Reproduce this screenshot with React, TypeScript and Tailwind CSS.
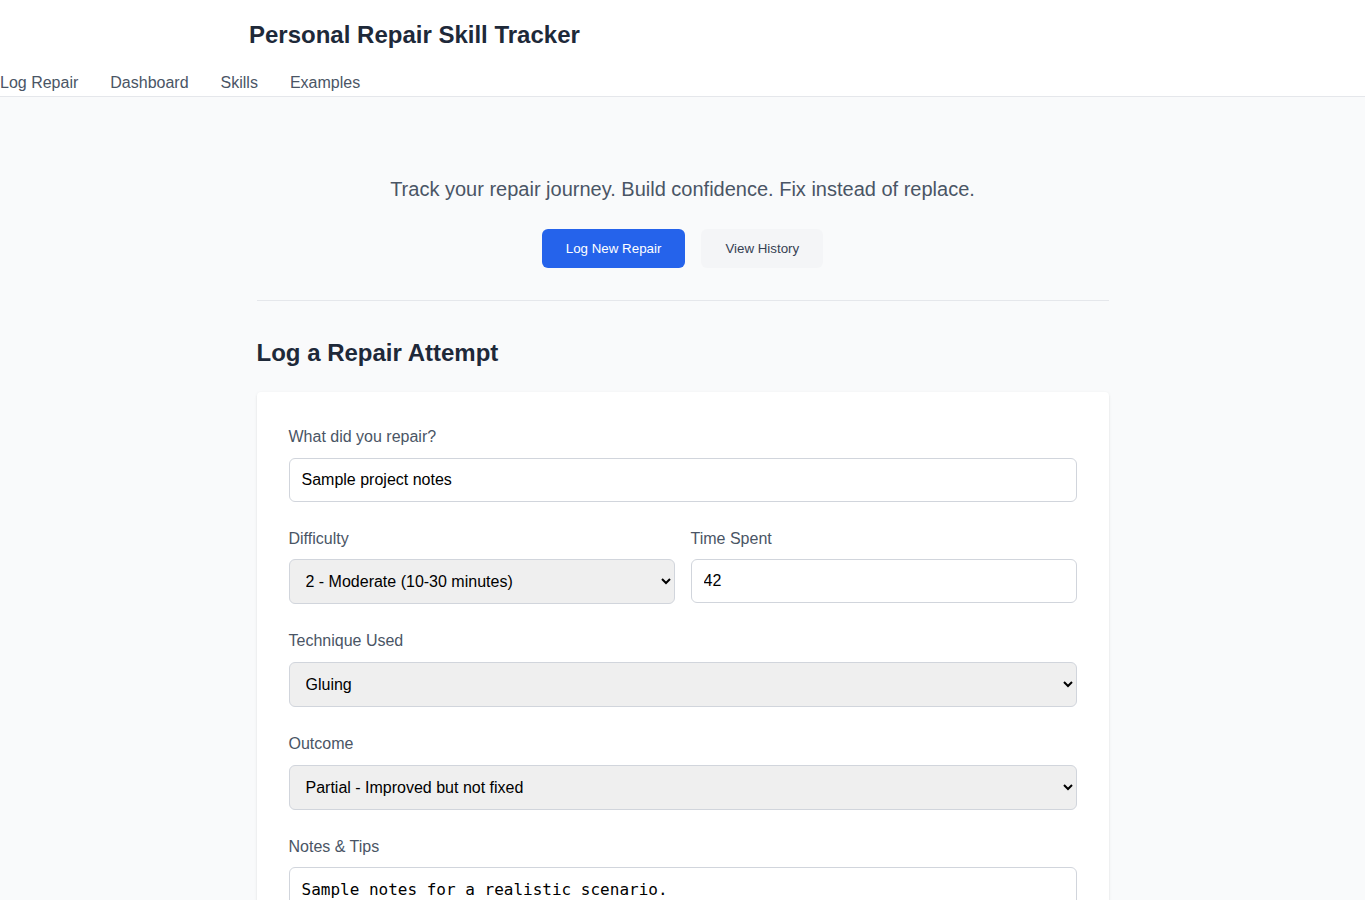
export default function App() {
  return (
    <div className="min-h-screen bg-gray-50 font-['Liberation_Sans',Arial,sans-serif]">
      {/* Header */}
      <header className="border-b border-gray-200 bg-white">
        <h1 className="pl-[249px] pt-[19px] text-2xl leading-8 font-bold text-gray-800">
          Personal Repair Skill Tracker
        </h1>
        <nav className="mt-5 flex gap-8 pb-px text-base leading-6 text-gray-600">
          <a href="#">Log Repair</a>
          <a href="#">Dashboard</a>
          <a href="#">Skills</a>
          <a href="#">Examples</a>
        </nav>
      </header>

      <main className="mx-auto w-[852px] pt-[78px] pb-16">
        {/* Intro */}
        <section className="flex flex-col items-center border-b border-gray-200 pb-8">
          <p className="text-xl leading-7 text-gray-600">
            Track your repair journey. Build confidence. Fix instead of replace.
          </p>
          <div className="mt-[26px] flex gap-4">
            <button className="rounded-md bg-[#2563eb] px-6 py-3 text-[13.33px] leading-[15px] text-white">
              Log New Repair
            </button>
            <button className="rounded-md bg-[#f4f5f7] px-6 py-3 text-[13.33px] leading-[15px] text-gray-700">
              View History
            </button>
          </div>
        </section>

        {/* Form */}
        <h2 className="mt-9 text-2xl leading-8 font-bold text-gray-800">Log a Repair Attempt</h2>

        <form className="mt-[23px] flex flex-col gap-6 rounded bg-white px-8 pt-8 pb-8 shadow-sm">
          <div>
            <label className="mb-[8.5px] block pt-px leading-6 text-gray-600">What did you repair?</label>
            <input
              className="h-11 w-full rounded-md border border-gray-300 px-3 text-base text-black"
              defaultValue="Sample project notes"
            />
          </div>

          <div className="grid grid-cols-2 gap-4">
            <div>
              <label className="mb-[8.5px] block pt-px leading-6 text-gray-600">Difficulty</label>
              <select
                className="h-[45.4px] w-full rounded-md border border-gray-300 bg-[#efefef] px-3 text-base text-black"
                defaultValue="2"
              >
                <option value="1">1 - Easy (under 10 minutes)</option>
                <option value="2">2 - Moderate (10-30 minutes)</option>
                <option value="3">3 - Hard (over 30 minutes)</option>
              </select>
            </div>
            <div>
              <label className="mb-[8.5px] block pt-px leading-6 text-gray-600">Time Spent</label>
              <input
                className="h-11 w-full rounded-md border border-gray-300 px-3 text-base text-black"
                defaultValue="42"
              />
            </div>
          </div>

          <div>
            <label className="mb-[8.5px] block pt-px leading-6 text-gray-600">Technique Used</label>
            <select
              className="h-[45.4px] w-full rounded-md border border-gray-300 bg-[#efefef] px-3 text-base text-black"
              defaultValue="Gluing"
            >
              <option>Gluing</option>
              <option>Sewing</option>
              <option>Soldering</option>
            </select>
          </div>

          <div>
            <label className="mb-[8.5px] block pt-px leading-6 text-gray-600">Outcome</label>
            <select
              className="h-[45.4px] w-full rounded-md border border-gray-300 bg-[#efefef] px-3 text-base text-black"
              defaultValue="partial"
            >
              <option value="success">Success - Fully fixed</option>
              <option value="partial">Partial - Improved but not fixed</option>
              <option value="fail">Failed - Could not fix</option>
            </select>
          </div>

          <div>
            <label className="mb-2 block pt-px leading-6 text-gray-600">Notes &amp; Tips</label>
            <textarea
              className="h-28 w-full rounded-md border border-gray-300 px-3 pt-[10px] pb-3 font-['DejaVu_Sans_Mono',monospace] text-base text-black"
              defaultValue="Sample notes for a realistic scenario."
            />
          </div>
        </form>
      </main>
    </div>
  );
}
